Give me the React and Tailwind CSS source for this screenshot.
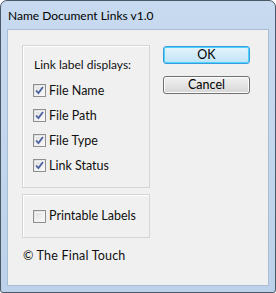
import React from "react";

const font = { fontFamily: 'Lato, "Open Sans", "Liberation Sans", sans-serif' };

function Check({ checked }) {
  return (
    <span className="relative w-[13px] h-[13px] border border-[#8f8f8f] bg-gradient-to-br from-[#d8d8d8] via-[#ececec] to-[#fbfbfb] shrink-0 flex items-center justify-center">
      <span className="absolute inset-[1px] border border-[#f4f4f4]" />
      {checked && (
        <svg width="9" height="9" viewBox="0 0 9 9" className="relative">
          <path d="M1 4.5 L3.4 7 L8 1" fill="none" stroke="#4a62a2" strokeWidth="1.8" />
        </svg>
      )}
    </span>
  );
}

function Row({ label, checked = true }) {
  return (
    <div className="flex items-center gap-[3px] h-[25px]">
      <Check checked={checked} />
      <span className="text-[12.5px] text-[#101010] leading-[16px]">{label}</span>
    </div>
  );
}

export default function App() {
  return (
    <div className="w-[276px] h-[293px] bg-white" style={font}>
      <div className="w-[276px] h-[293px] rounded-t-[7px] rounded-b-[3px] border border-[#4a5868] bg-gradient-to-b from-[#c7daef] to-[#bdd2ea] flex flex-col">
        <div className="h-[28px] pl-[7px] flex items-center text-[12px] text-black pt-[1px]">
          Name Document Links v1.0
        </div>
        <div className="mx-[6px] mb-[6px] flex-1 border border-[#a9bdd3] bg-[#f0f0f0] flex pl-[14px] pt-[15px]">
          <div className="w-[128px] flex flex-col">
            <div className="h-[143px] border border-[#d5d5d5] shadow-[inset_1px_1px_0_#ffffff] pl-[10px] pt-[11px]">
              <div className="text-[12px] leading-[16px] text-[#101010] pl-[1px] mb-[5px]">Link label displays:</div>
              <Row label="File Name" />
              <Row label="File Path" />
              <Row label="File Type" />
              <Row label="Link Status" />
            </div>
            <div className="mt-[6px] h-[44px] border border-[#d5d5d5] shadow-[inset_1px_1px_0_#ffffff] pl-[10px] flex items-center">
              <Row label="Printable Labels" checked={false} />
            </div>
            <div className="mt-[10px] pl-[1px] text-[12.5px] leading-[16px] text-[#101010] tracking-[0.2px]">© The Final Touch</div>
          </div>
          <div className="ml-[13px] flex flex-col">
            <button className="mt-[1px] w-[87px] h-[18px] rounded-[3px] border border-[#3c9be0] bg-gradient-to-b from-[#e5f4fc] to-[#bfe3f7] shadow-[inset_0_0_0_1px_#48d6fb] text-[12.5px] leading-[14px] text-black">
              OK
            </button>
            <button className="mt-[12px] w-[87px] h-[18px] rounded-[3px] border border-[#707070] bg-gradient-to-b from-[#f2f2f2] to-[#d6d6d6] shadow-[inset_0_0_0_1px_#fcfcfc] text-[12.5px] leading-[14px] text-black">
              Cancel
            </button>
          </div>
        </div>
      </div>
    </div>
  );
}
